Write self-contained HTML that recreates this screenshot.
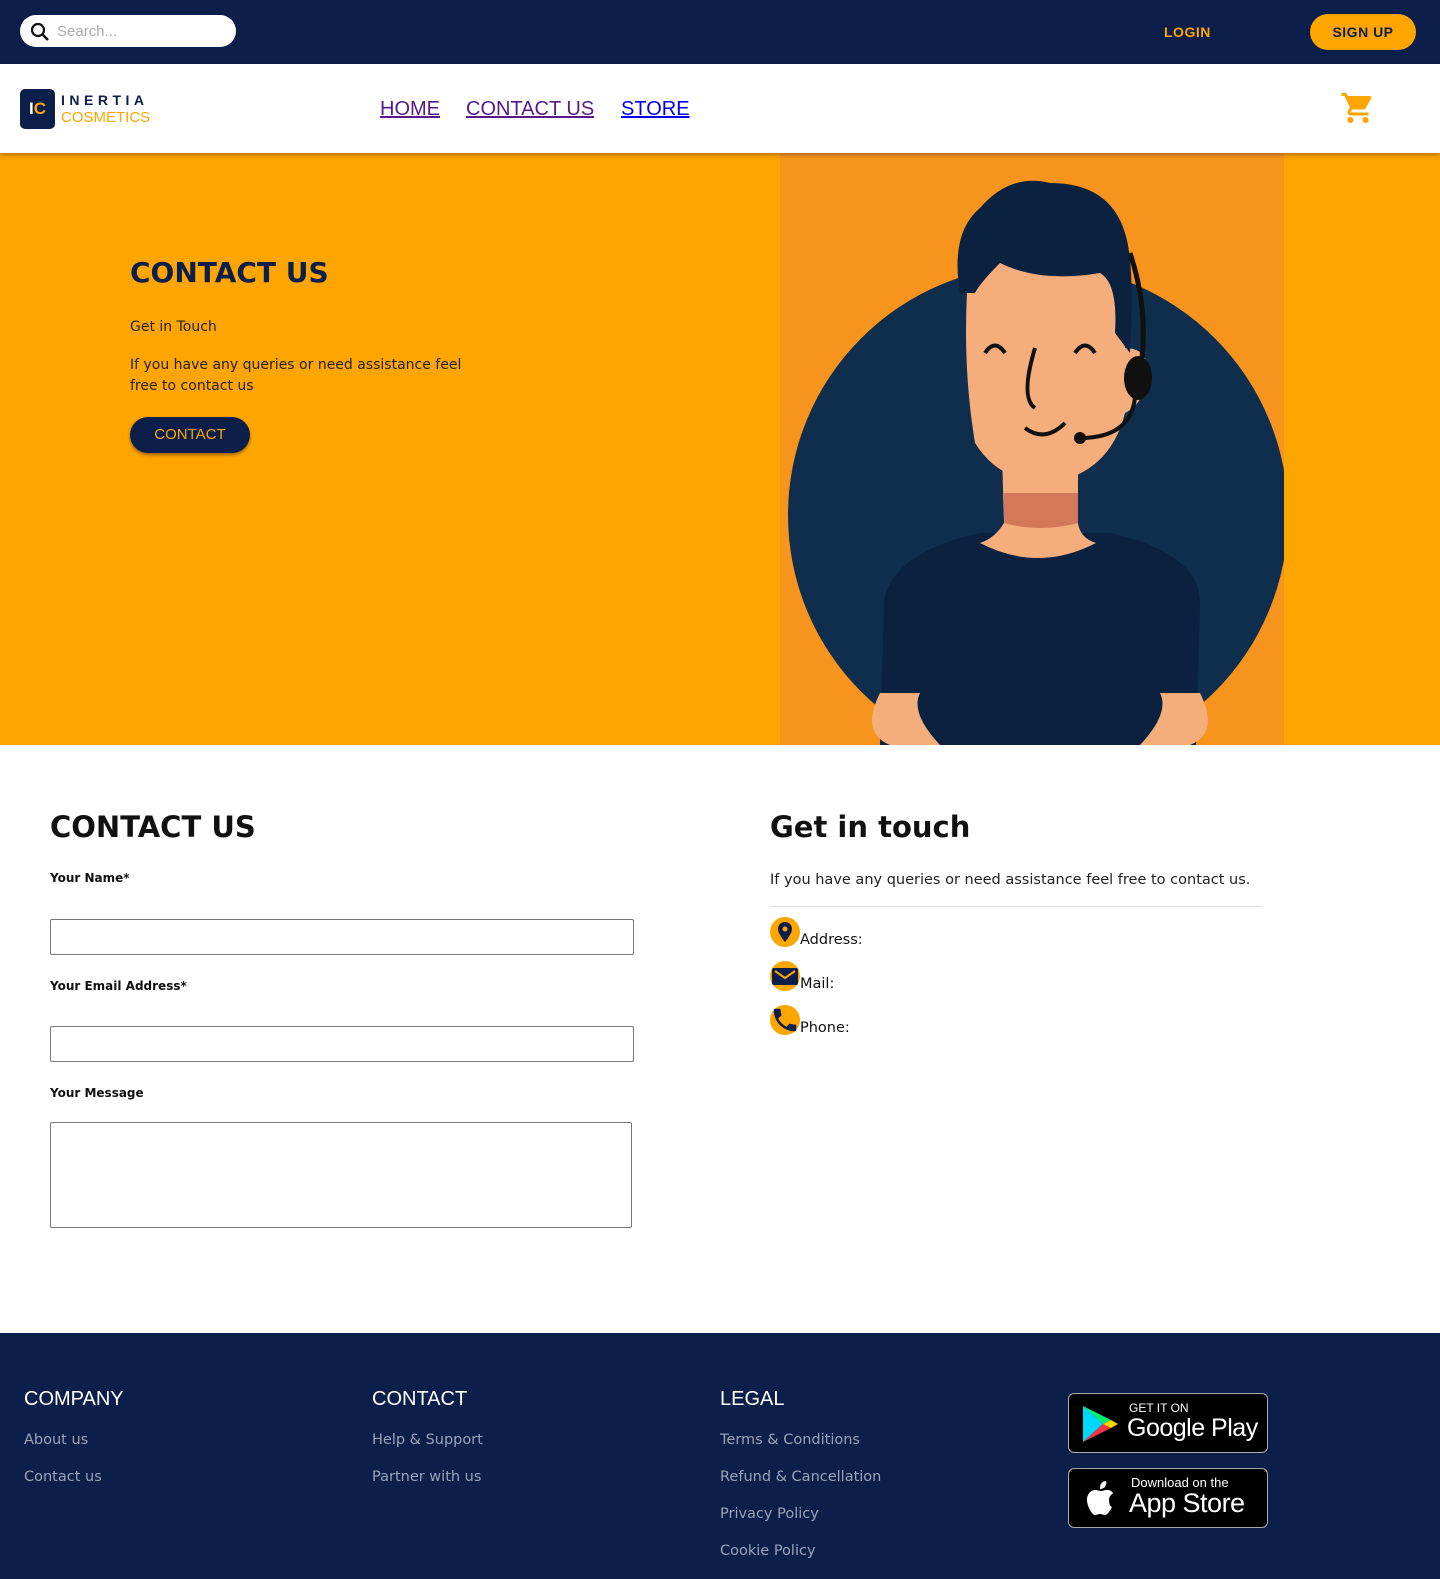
<!DOCTYPE html>
<html><head><meta charset="utf-8"><style>
*{margin:0;padding:0;box-sizing:border-box}
body{width:1440px;height:1579px;font-family:"Liberation Sans",sans-serif;background:#fff;position:relative;overflow:hidden}
.top{position:absolute;left:0;top:0;width:1440px;height:64px;background:#0c1f4a}
.search{position:absolute;left:20px;top:15px;width:216px;height:32px;background:#fff;border-radius:16px;color:#aaa;font-size:15px;padding:8px 0 0 37px}
.login{position:absolute;left:1164px;top:24px;color:#ffa500;font-weight:bold;font-size:14px;letter-spacing:.5px}
.signup{position:absolute;left:1310px;top:14px;width:106px;height:36px;background:#ffa500;border-radius:18px;color:#0c1f4a;font-weight:bold;font-size:14px;text-align:center;line-height:36px;letter-spacing:.5px}
.nav{position:absolute;left:0;top:64px;width:1440px;height:89px;background:#fff;box-shadow:0 2px 4px rgba(0,0,0,.3);z-index:2}
.nav a{position:absolute;top:34px;font-size:20px;text-decoration:underline}
.hero{position:absolute;left:0;top:153px;width:1440px;height:592px;background:#ffa500;overflow:hidden}
.h1{font-family:"DejaVu Sans",sans-serif;font-weight:bold}
.lbl{position:absolute;left:50px;font-size:12px;font-weight:bold;font-family:"DejaVu Sans",sans-serif;color:#111}
.inp{position:absolute;left:50px;width:584px;border:1px solid #777;border-radius:2px}
.foot{position:absolute;left:0;top:1333px;width:1440px;height:246px;background:#0c1f4a;color:#fff}
.foot h3{position:absolute;top:55px;font-weight:normal;font-size:20px}
.foot p{position:absolute;font-size:14.5px;color:#9aa3b8;font-family:"DejaVu Sans",sans-serif}
.badge{position:absolute;left:1068px;width:200px;height:60px;background:#000;border:1px solid #aaa;border-radius:6px;color:#fff}
.ic{position:absolute;left:770px;width:30px;height:30px;border-radius:50%;background:#ffa500}
.it{position:absolute;left:800px;font-size:14.5px;font-family:"DejaVu Sans",sans-serif;color:#111}
</style></head><body>
<div class="top">
 <div class="search"><svg style="position:absolute;left:10px;top:7px" width="20" height="20" viewBox="0 0 20 20"><circle cx="8" cy="8" r="6" fill="none" stroke="#111" stroke-width="2.2"/><path d="M12 12l6 6" stroke="#111" stroke-width="2.6"/></svg>Search...</div>
 <div class="login">LOGIN</div>
 <div class="signup">SIGN UP</div>
</div>
<div class="nav">
 <div style="position:absolute;left:20px;top:25px;width:35px;height:40px;background:#0c1f4a;border-radius:5px;color:#fff;font-weight:bold;font-size:17px;text-align:center;line-height:40px">I<span style="color:#ffa500">C</span></div>
 <div style="position:absolute;left:61px;top:28px;font-size:14px;font-weight:bold;letter-spacing:4.5px;color:#0c1f4a">INERTIA</div>
 <div style="position:absolute;left:61px;top:45px;font-size:15px;color:#ffa500">COSMETICS</div>
 <a style="left:380px;color:#551a8b">HOME</a>
 <a style="left:466px;color:#551a8b">CONTACT US</a>
 <a style="left:621px;color:#00e">STORE</a>
 <svg style="position:absolute;left:1340px;top:26px" width="36" height="36" viewBox="0 0 24 24"><path fill="#ffa500" d="M7 18c-1.1 0-2 .9-2 2s.9 2 2 2 2-.9 2-2-.9-2-2-2zM1 2v2h2l3.6 7.6-1.4 2.4c-.1.3-.2.6-.2 1 0 1.1.9 2 2 2h12v-2H7.4c-.1 0-.2-.1-.2-.2v-.1l.9-1.7h7.4c.8 0 1.4-.4 1.700-1l3.6-6.5c.1-.2.1-.3.1-.5 0-.6-.4-1-1-1H5.2l-.9-2H1zm16 16c-1.1 0-2 .9-2 2s.9 2 2 2 2-.9 2-2-.9-2-2-2z"/></svg>
</div>
<div class="hero">
 <div class="h1" style="position:absolute;left:130px;top:103px;font-size:28px;color:#0c1f4a">CONTACT US</div>
 <div style="position:absolute;left:130px;top:166px;font-size:14px;color:#222;font-family:'DejaVu Sans',sans-serif">Get in Touch</div>
 <div style="position:absolute;left:130px;top:202px;width:340px;font-size:14px;line-height:21px;color:#222;font-family:'DejaVu Sans',sans-serif">If you have any queries or need assistance feel free to contact us</div>
 <div style="position:absolute;left:130px;top:264px;width:120px;height:36px;background:#0c1f4a;border-radius:18px;color:#ffa500;font-size:15px;text-align:center;line-height:36px;box-shadow:0 2px 3px rgba(0,0,0,.4)">CONTACT</div>
 <svg style="position:absolute;left:780px;top:0" width="504" height="592" viewBox="0 0 504 592">
  <rect width="504" height="592" fill="#f7941d"/>
  <circle cx="258" cy="362" r="250" fill="#0f2d4d"/>
  <path d="M100 592 L104 450 Q110 400 200 380 L330 380 Q420 400 420 450 L416 592Z" fill="#0a2240"/>
  <path d="M100 540 Q80 580 110 592 L160 592 Q130 560 140 540Z" fill="#f5ad7c"/>
  <path d="M420 540 Q440 580 410 592 L360 592 Q390 560 380 540Z" fill="#f5ad7c"/>
  <path d="M222 300 L224 370 Q215 385 200 390 Q258 420 316 390 Q300 385 298 370 L298 300Z" fill="#f5ad7c"/>
  <path d="M224 340 L298 340 L298 370 Q260 380 224 370Z" fill="#d4785a"/>
  <path d="M190 100 Q180 200 195 290 Q220 330 270 330 Q330 320 345 260 Q365 250 368 220 Q368 195 345 195 L335 110Z" fill="#f5ad7c"/>
  <path d="M180 140 Q170 80 200 55 Q230 20 270 30 Q330 30 345 80 Q355 110 350 200 L335 180 Q338 130 320 120 Q260 130 220 110 Q200 130 195 140Z" fill="#0a2240"/>
  <path d="M350 100 Q370 160 360 220" stroke="#111" stroke-width="5" fill="none"/>
  <ellipse cx="358" cy="225" rx="14" ry="22" fill="#111"/>
  <path d="M355 245 Q350 285 300 285" stroke="#111" stroke-width="4" fill="none"/>
  <circle cx="300" cy="285" r="6" fill="#111"/>
  <path d="M205 200 Q215 185 225 200 M295 200 Q305 185 315 200" stroke="#111" stroke-width="4" fill="none"/>
  <path d="M255 195 Q240 245 255 255 M245 275 Q265 290 285 270" stroke="#111" stroke-width="4" fill="none"/>
 </svg>
</div>
<div class="h1" style="position:absolute;left:50px;top:810px;font-size:29px;color:#111">CONTACT US</div>
<div class="lbl" style="top:871px">Your Name*</div>
<div class="inp" style="top:919px;height:36px"></div>
<div class="lbl" style="top:979px">Your Email Address*</div>
<div class="inp" style="top:1026px;height:36px"></div>
<div class="lbl" style="top:1086px">Your Message</div>
<div class="inp" style="top:1122px;height:106px;width:582px"></div>
<div class="h1" style="position:absolute;left:770px;top:810px;font-size:29px;color:#111">Get in touch</div>
<div style="position:absolute;left:770px;top:872px;font-size:14.5px;color:#222;font-family:'DejaVu Sans',sans-serif">If you have any queries or need assistance feel free to contact us.</div>
<div style="position:absolute;left:770px;top:906px;width:492px;height:1px;background:#ddd"></div>
<div class="ic" style="top:917px"><svg width="30" height="30" viewBox="0 0 30 30"><path d="M15 5a7 7 0 0 0-7 7c0 5 7 13 7 13s7-8 7-13a7 7 0 0 0-7-7z" fill="#0c1f4a"/><circle cx="15" cy="12" r="2.5" fill="#ffa500"/></svg></div>
<div class="it" style="top:932px">Address:</div>
<div class="ic" style="top:961px"><svg width="30" height="30" viewBox="0 0 30 30"><rect x="2" y="7" width="26" height="17" rx="2" fill="#0c1f4a"/><path d="M5 10l10 7 10-7" stroke="#ffa500" stroke-width="2" fill="none"/></svg></div>
<div class="it" style="top:976px">Mail:</div>
<div class="ic" style="top:1005px"><svg width="30" height="30" viewBox="0 0 24 24"><path fill="#0c1f4a" d="M6.6 10.8c1.4 2.8 3.8 5.1 6.6 6.6l2.2-2.2c.3-.3.7-.4 1-.2 1.1.4 2.3.6 3.6.6.6 0 1 .4 1 1V20c0 .6-.4 1-1 1C10.6 21 3 13.4 3 4c0-.6.4-1 1-1h3.5c.6 0 1 .4 1 1 0 1.300.2 2.500.6 3.600.1.300 0 .700-.2 1L6.6 10.8z"/></svg></div>
<div class="it" style="top:1020px">Phone:</div>
<div class="foot">
 <h3 style="left:24px">COMPANY</h3><h3 style="left:372px">CONTACT</h3><h3 style="left:720px">LEGAL</h3>
 <p style="left:24px;top:99px">About us</p><p style="left:24px;top:136px">Contact us</p>
 <p style="left:372px;top:99px">Help &amp; Support</p><p style="left:372px;top:136px">Partner with us</p>
 <p style="left:720px;top:99px">Terms &amp; Conditions</p><p style="left:720px;top:136px">Refund &amp; Cancellation</p>
 <p style="left:720px;top:173px">Privacy Policy</p><p style="left:720px;top:210px">Cookie Policy</p>
 <div class="badge" style="top:60px"><svg style="position:absolute;left:12px;top:10px" width="38" height="40" viewBox="0 0 38 40"><path d="M2 2L22 20 2 38Z" fill="#00d7fe"/><path d="M2 2L30 16 22 20Z" fill="#00f076"/><path d="M2 38L30 24 22 20Z" fill="#f63448"/><path d="M30 16L37 20 30 24 22 20Z" fill="#ffd400"/></svg><div style="position:absolute;left:60px;top:7px;font-size:12px">GET IT ON</div><div style="position:absolute;left:58px;top:20px;font-size:25px;letter-spacing:-.5px">Google Play</div></div>
 <div class="badge" style="top:135px"><svg style="position:absolute;left:14px;top:10px" width="34" height="40" viewBox="0 0 34 40"><path d="M26 21c0-5 4-6 4-7-2-3-5-3-6-3-3 0-4 1-6 1s-3-1-6-1c-3 0-8 3-8 10 0 6 5 15 8 15 2 0 3-1 5-1s3 1 5 1c3 0 6-6 7-8-1 0-3-2-3-7zM22 8c1-2 2-4 1-6-2 0-4 1-5 3-1 1-1 3-1 5 2 0 4-1 5-2z" fill="#fff"/></svg><div style="position:absolute;left:62px;top:6px;font-size:13px">Download on the</div><div style="position:absolute;left:60px;top:19px;font-size:27px;letter-spacing:-.5px">App Store</div></div>
</div>
</body></html>
